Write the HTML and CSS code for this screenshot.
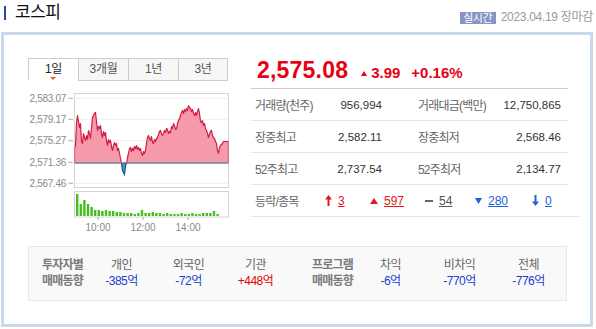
FILE: index.html
```html
<!DOCTYPE html>
<html>
    <head>
        <meta charset="utf-8">
        <link rel="stylesheet" href="styles.css">
    </head>
    <body>
        <div class="wrap">
            <div class="head">
                <h2 class="title">코스피</h2>
                <div class="stamp">
                    <span class="badge">실시간</span>
                    <span class="date">2023.04.19 장마감</span>
                </div>
            </div>

            <div class="box">
                <div class="top">
                    <div class="chart-col">
                        <ul class="tabs">
                            <li class="on">1일</li>
                            <li>3개월</li>
                            <li>1년</li>
                            <li>3년</li>
                        </ul>
                        <svg class="chart" width="201" height="145" viewBox="0 0 201 145">
                            <defs>
                                <clipPath id="clipUp"><rect x="0" y="0" width="154" height="69.3"/></clipPath>
                                <clipPath id="clipDown"><rect x="0" y="69.3" width="154" height="25"/></clipPath>
                            </defs>
                            <!-- y axis -->
                            <g class="ylab">
                                <text x="38" y="13.8">2,583.07</text>
                                <text x="38" y="34.8">2,579.17</text>
                                <text x="38" y="56.2">2,575.27</text>
                                <text x="38" y="77.8">2,571.36</text>
                                <text x="38" y="98.8">2,567.46</text>
                            </g>
                            <g class="tick">
                                <line x1="40.5" y1="10.3" x2="45" y2="10.3"/>
                                <line x1="40.5" y1="31.3" x2="45" y2="31.3"/>
                                <line x1="40.5" y1="52.7" x2="45" y2="52.7"/>
                                <line x1="40.5" y1="74.3" x2="45" y2="74.3"/>
                                <line x1="40.5" y1="95.3" x2="45" y2="95.3"/>
                            </g>
                            <rect class="frame" x="46.5" y="5.5" width="154" height="94"/>
                            <g transform="translate(46.5,5.5)">
                                <g class="grid">
                                    <line x1="0" y1="4.8" x2="154" y2="4.8"/>
                                    <line x1="0" y1="25.8" x2="154" y2="25.8"/>
                                    <line x1="0" y1="47.2" x2="154" y2="47.2"/>
                                    <line x1="0" y1="89.8" x2="154" y2="89.8"/>
                                </g>
                                <g clip-path="url(#clipUp)">
                                    <path class="area-up" d="M0,69.3 L0,55 1,52 2,30 3,22 4,28 5,34 6,30 7,48 8,50 9,40 10,44 11,47 12,42 13,46 14,37 15,40 16,45 17,35 18,24 19,22 20,20 21,19 22,28 23,37 24,33 25,35 26,32 27,40 28,44 29,38 30,42 31,39 32,47 33,52 34,46 35,49 36,47 37,53 38,57 39,52 40,49 41,52 42,50 43,57 44,55 45,60 46,65 47,70 48,77 49,79 50,81 51,72 52,70 53,64 54,60 55,55 56,54 57,58 58,55 59,57 60,53 61,55 62,52 63,56 64,54 65,57 66,55 67,60 68,62 69,58 70,60 71,57 72,50 73,44 74,42 75,45 76,47 77,43 78,49 79,50 80,46 81,48 82,45 83,44 84,41 85,38 86,37 87,40 88,42 89,40 90,37 91,39 92,35 93,36 94,40 95,38 96,39 97,33 98,35 99,30 100,32 101,36 102,35 103,30 104,27 105,25 106,22 107,19 108,17 109,20 110,16 111,18 112,15 113,17 114,12 115,14 116,15 117,18 118,16 119,20 120,22 121,19 122,22 123,18 124,15 125,20 126,28 127,29 128,27 129,32 130,30 131,35 132,37 133,40 134,44 135,41 136,38 137,37 138,42 139,44 140,45 141,48 142,50 143,57 144,60 145,54 146,52 147,51 148,50 149,48 150,48 154,48 L154,69.3 Z"/>
                                </g>
                                <g clip-path="url(#clipDown)">
                                    <path class="area-down" d="M0,69.3 L0,55 1,52 2,30 3,22 4,28 5,34 6,30 7,48 8,50 9,40 10,44 11,47 12,42 13,46 14,37 15,40 16,45 17,35 18,24 19,22 20,20 21,19 22,28 23,37 24,33 25,35 26,32 27,40 28,44 29,38 30,42 31,39 32,47 33,52 34,46 35,49 36,47 37,53 38,57 39,52 40,49 41,52 42,50 43,57 44,55 45,60 46,65 47,70 48,77 49,79 50,81 51,72 52,70 53,64 54,60 55,55 56,54 57,58 58,55 59,57 60,53 61,55 62,52 63,56 64,54 65,57 66,55 67,60 68,62 69,58 70,60 71,57 72,50 73,44 74,42 75,45 76,47 77,43 78,49 79,50 80,46 81,48 82,45 83,44 84,41 85,38 86,37 87,40 88,42 89,40 90,37 91,39 92,35 93,36 94,40 95,38 96,39 97,33 98,35 99,30 100,32 101,36 102,35 103,30 104,27 105,25 106,22 107,19 108,17 109,20 110,16 111,18 112,15 113,17 114,12 115,14 116,15 117,18 118,16 119,20 120,22 121,19 122,22 123,18 124,15 125,20 126,28 127,29 128,27 129,32 130,30 131,35 132,37 133,40 134,44 135,41 136,38 137,37 138,42 139,44 140,45 141,48 142,50 143,57 144,60 145,54 146,52 147,51 148,50 149,48 150,48 154,48 L154,69.3 Z"/>
                                </g>
                                <line class="base" x1="0" y1="69.3" x2="154" y2="69.3"/>
                            </g>

                            <!-- volume -->
                            <rect class="frame" x="46.5" y="103.5" width="154" height="25.5"/>
                            <g class="bars">
                                <rect x="48" y="106" width="2.4" height="22"/>
                                <rect x="51.6" y="116" width="2.4" height="12"/>
                                <rect x="55.2" y="112" width="2.4" height="16"/>
                                <rect x="58.8" y="116" width="2.4" height="12"/>
                                <rect x="62.4" y="119" width="2.4" height="9"/>
                                <rect x="66" y="122" width="2.4" height="6"/>
                                <rect x="69.6" y="122" width="2.4" height="6"/>
                                <rect x="73.2" y="123" width="2.4" height="5"/>
                                <rect x="76.8" y="122" width="2.4" height="6"/>
                                <rect x="80.4" y="123" width="2.4" height="5"/>
                                <rect x="84" y="123" width="2.4" height="5"/>
                                <rect x="87.6" y="124" width="2.4" height="4"/>
                                <rect x="91.2" y="124" width="2.4" height="4"/>
                                <rect x="94.8" y="125" width="2.4" height="3"/>
                                <rect x="98.4" y="125" width="2.4" height="3"/>
                                <rect x="102" y="125" width="2.4" height="3"/>
                                <rect x="105.6" y="126" width="2.4" height="2"/>
                                <rect x="109.2" y="125" width="2.4" height="3"/>
                                <rect x="112.8" y="122" width="2.4" height="6"/>
                                <rect x="116.4" y="125" width="2.4" height="3"/>
                                <rect x="120" y="125" width="2.4" height="3"/>
                                <rect x="123.6" y="124" width="2.4" height="4"/>
                                <rect x="127.2" y="125" width="2.4" height="3"/>
                                <rect x="130.8" y="125" width="2.4" height="3"/>
                                <rect x="134.4" y="126" width="2.4" height="2"/>
                                <rect x="138" y="125" width="2.4" height="3"/>
                                <rect x="141.6" y="126" width="2.4" height="2"/>
                                <rect x="145.2" y="126" width="2.4" height="2"/>
                                <rect x="148.8" y="126" width="2.4" height="2"/>
                                <rect x="152.4" y="125" width="2.4" height="3"/>
                                <rect x="156" y="126" width="2.4" height="2"/>
                                <rect x="159.6" y="126" width="2.4" height="2"/>
                                <rect x="163.2" y="125" width="2.4" height="3"/>
                                <rect x="166.8" y="126" width="2.4" height="2"/>
                                <rect x="170.4" y="126" width="2.4" height="2"/>
                                <rect x="174" y="125" width="2.4" height="3"/>
                                <rect x="177.6" y="125" width="2.4" height="3"/>
                                <rect x="181.2" y="125" width="2.4" height="3"/>
                                <rect x="184.8" y="123" width="2.4" height="5"/>
                                <rect x="188.4" y="126" width="2.4" height="2"/>
                            </g>
                            <g class="tick">
                                <line x1="70" y1="129" x2="70" y2="132"/>
                                <line x1="115" y1="129" x2="115" y2="132"/>
                                <line x1="160" y1="129" x2="160" y2="132"/>
                            </g>
                            <g class="xlab">
                                <text x="70" y="143">10:00</text>
                                <text x="115" y="143">12:00</text>
                                <text x="160" y="143">14:00</text>
                            </g>
                        </svg>
                    </div>

                    <div class="info">
                        <div class="now">
                            <strong class="price">2,575.08</strong>
                            <span class="chg"><svg class="tri" width="6" height="5" viewBox="0 0 6 5"><polygon points="3,0 6,5 0,5" fill="#e60012"/></svg>3.99</span>
                            <span class="rate">+0.16%</span>
                        </div>
                        <div class="row">
                            <span class="lbl">거래량(천주)</span><span class="val">956,994</span>
                            <span class="lbl">거래대금(백만)</span><span class="val">12,750,865</span>
                        </div>
                        <div class="row">
                            <span class="lbl">장중최고</span><span class="val">2,582.11</span>
                            <span class="lbl">장중최저</span><span class="val">2,568.46</span>
                        </div>
                        <div class="row">
                            <span class="lbl">52주최고</span><span class="val">2,737.54</span>
                            <span class="lbl">52주최저</span><span class="val">2,134.77</span>
                        </div>
                        <div class="row updown">
                            <span class="lbl">등락/종목</span>
                            <span class="ud w1">
                                <svg width="7" height="11" viewBox="0 0 7 11"><polygon points="3.5,0 7,4.5 4.5,4.5 4.5,11 2.5,11 2.5,4.5 0,4.5" fill="#e5191c"/></svg>
                                <a class="red">3</a>
                            </span>
                            <span class="ud w2">
                                <svg width="8" height="6" viewBox="0 0 8 6"><polygon points="4,0 8,6 0,6" fill="#e5191c"/></svg>
                                <a class="red">597</a>
                            </span>
                            <span class="ud w3">
                                <svg width="8" height="2" viewBox="0 0 8 2"><rect width="8" height="2" fill="#666"/></svg>
                                <a class="gray">54</a>
                            </span>
                            <span class="ud w4">
                                <svg width="7" height="6" viewBox="0 0 7 6"><polygon points="0,0 7,0 3.5,6" fill="#1e62d6"/></svg>
                                <a class="blue">280</a>
                            </span>
                            <span class="ud">
                                <svg width="7" height="11" viewBox="0 0 7 11"><polygon points="2.5,0 4.5,0 4.5,6.5 7,6.5 3.5,11 0,6.5 2.5,6.5" fill="#1e62d6"/></svg>
                                <a class="blue">0</a>
                            </span>
                        </div>
                    </div>
                </div>

                <div class="trade">
                    <div class="group g1">
                        <div class="gtit">투자자별<br>매매동향</div>
                        <div class="item"><span class="name">개인</span><span class="num minus">-385억</span></div>
                        <div class="item"><span class="name">외국인</span><span class="num minus">-72억</span></div>
                        <div class="item"><span class="name">기관</span><span class="num plus">+448억</span></div>
                    </div>
                    <div class="group g2">
                        <div class="gtit">프로그램<br>매매동향</div>
                        <div class="item"><span class="name">차익</span><span class="num minus">-6억</span></div>
                        <div class="item"><span class="name">비차익</span><span class="num minus">-770억</span></div>
                        <div class="item"><span class="name">전체</span><span class="num minus">-776억</span></div>
                    </div>
                </div>
            </div>
        </div>
    </body>
</html>
```

FILE: styles.css
```css
body {
    margin: 0;
    font-family: "Liberation Sans", "Noto Sans CJK KR", sans-serif;
    color: #333;
    background-color: #fff;
}

.wrap {
    width: 592px;
    margin-left: 1px;
}

/* header */
.head {
    height: 32px;
    display: flex;
    justify-content: space-between;
}
.title {
    margin: 0;
    margin-top: 6px;
    height: 14px;
    padding-left: 9px;
    border-left: 2px solid #26499c;
    margin-left: 3px;
    font-size: 17px;
    font-weight: normal;
    line-height: 14px;
    color: #111;
    letter-spacing: -0.5px;
}
.stamp {
    display: flex;
    align-items: center;
    margin-top: 11px;
    height: 13px;
}
.badge {
    display: inline-block;
    width: 36px;
    height: 12px;
    line-height: 12px;
    background-color: #8794c4;
    color: #fff;
    font-size: 11px;
    text-align: center;
    letter-spacing: -0.5px;
}
.date {
    margin-left: 5px;
    font-size: 12px;
    color: #999;
    line-height: 13px;
    letter-spacing: -0.3px;
}

/* main box */
.box {
    height: 295px;
    box-sizing: border-box;
    border: 3px solid #c9d8ea;
    padding: 23px 0 0 24px;
}
.top {
    display: flex;
    height: 188px;
}
.chart-col {
    width: 201px;
}

.tabs {
    list-style: none;
    margin: 0;
    padding: 0;
    display: flex;
    height: 24px;
}
.tabs li {
    position: relative;
    width: 50px;
    height: 23px;
    box-sizing: border-box;
    border: 1px solid #ccc;
    border-right: none;
    background-color: #f7f7f7;
    font-size: 12px;
    line-height: 21px;
    text-align: center;
    color: #555;
    letter-spacing: -0.3px;
}
.tabs li:last-child {
    border-right: 1px solid #ccc;
}
.tabs li.on {
    background-color: #fff;
    border-bottom-color: #fff;
    color: #222;
}
.tabs li.on::after {
    content: "";
    position: absolute;
    left: 21px;
    bottom: 0;
    border-left: 3px solid transparent;
    border-right: 3px solid transparent;
    border-top: 3px solid #f05a19;
}

.chart {
    display: block;
    margin-top: 6px;
}
.ylab text {
    font-family: "Liberation Sans", sans-serif;
    font-size: 10px;
    fill: #8a8a8a;
    text-anchor: end;
    letter-spacing: -0.3px;
}
.xlab text {
    font-family: "Liberation Sans", sans-serif;
    font-size: 10px;
    fill: #8a8a8a;
    text-anchor: middle;
}
.tick line {
    stroke: #aaa;
    stroke-width: 1;
}
.frame {
    fill: #fff;
    stroke: #d4d4d4;
    stroke-width: 1;
}
.grid line {
    stroke: #eee;
    stroke-width: 1;
}
.area-up {
    fill: #f59aaa;
    stroke: #d11d45;
    stroke-width: 1.2;
    stroke-linejoin: round;
}
.area-down {
    fill: #4f97cf;
    stroke: #11588f;
    stroke-width: 1.2;
}
.base {
    stroke: #999;
    stroke-width: 1;
    stroke-dasharray: 2 1;
}
.bars rect {
    fill: #43bf1f;
}

/* info */
.info {
    width: 317px;
    margin-left: 22px;
}
.now {
    height: 31px;
    box-sizing: border-box;
    border-bottom: 1px solid #ccc;
    padding-left: 6px;
    line-height: 25px;
    color: #e60012;
    display: flex;
    align-items: baseline;
}
.price {
    font-size: 23px;
    font-weight: bold;
    letter-spacing: 0.2px;
}
.chg {
    margin-left: 13px;
    font-size: 15px;
    font-weight: bold;
}
.tri {
    margin-right: 4px;
    vertical-align: 2px;
}
.rate {
    margin-left: 11px;
    font-size: 15px;
    font-weight: bold;
}

.row {
    height: 32px;
    box-sizing: border-box;
    border-bottom: 1px solid #e5e5e5;
    display: grid;
    grid-template-columns: 70px 57px 116px 63px;
    padding-left: 4px;
    align-items: center;
    font-size: 11px;
}
.row .lbl {
    color: #666;
    font-size: 12px;
    letter-spacing: -0.8px;
}
.row .val {
    text-align: right;
    color: #333;
    font-size: 11.5px;
}
.row .lbl:nth-child(3) {
    margin-left: 36px;
}

.updown {
    display: flex;
    margin-right: -11px;
}
.updown .lbl {
    width: 70px;
}
.ud {
    display: flex;
    align-items: center;
    font-size: 12px;
}
.ud svg {
    margin-right: 6px;
}
.w1 { width: 45px; }
.w2 { width: 55px; }
.w3 { width: 50px; }
.w4 { width: 57px; }
.ud a {
    text-decoration: underline;
    cursor: pointer;
}
.red { color: #e5191c; }
.gray { color: #555; }
.blue { color: #1e62d6; }

/* trade summary */
.trade {
    width: 539px;
    height: 55px;
    box-sizing: border-box;
    border: 1px solid #e8e8e8;
    background-color: #f9f9f9;
    display: flex;
}
.group {
    display: flex;
    padding-top: 10px;
}
.g1 {
    width: 271px;
    padding-left: 13px;
    box-sizing: border-box;
}
.g2 {
    padding-left: 12px;
}
.gtit {
    font-size: 12px;
    font-weight: bold;
    line-height: 16px;
    color: #7a7a7a;
    letter-spacing: -0.8px;
}
.g1 .gtit { width: 46px; }
.g2 .gtit { width: 44px; }
.item {
    display: flex;
    flex-direction: column;
    align-items: center;
    line-height: 16px;
    font-size: 12px;
}
.g1 .item { width: 67px; }
.g2 .item { width: 69px; }
.name {
    color: #666;
    letter-spacing: -0.5px;
}
.num {
    letter-spacing: -0.5px;
}
.minus { color: #1a3fd0; }
.plus { color: #e60000; }
```
